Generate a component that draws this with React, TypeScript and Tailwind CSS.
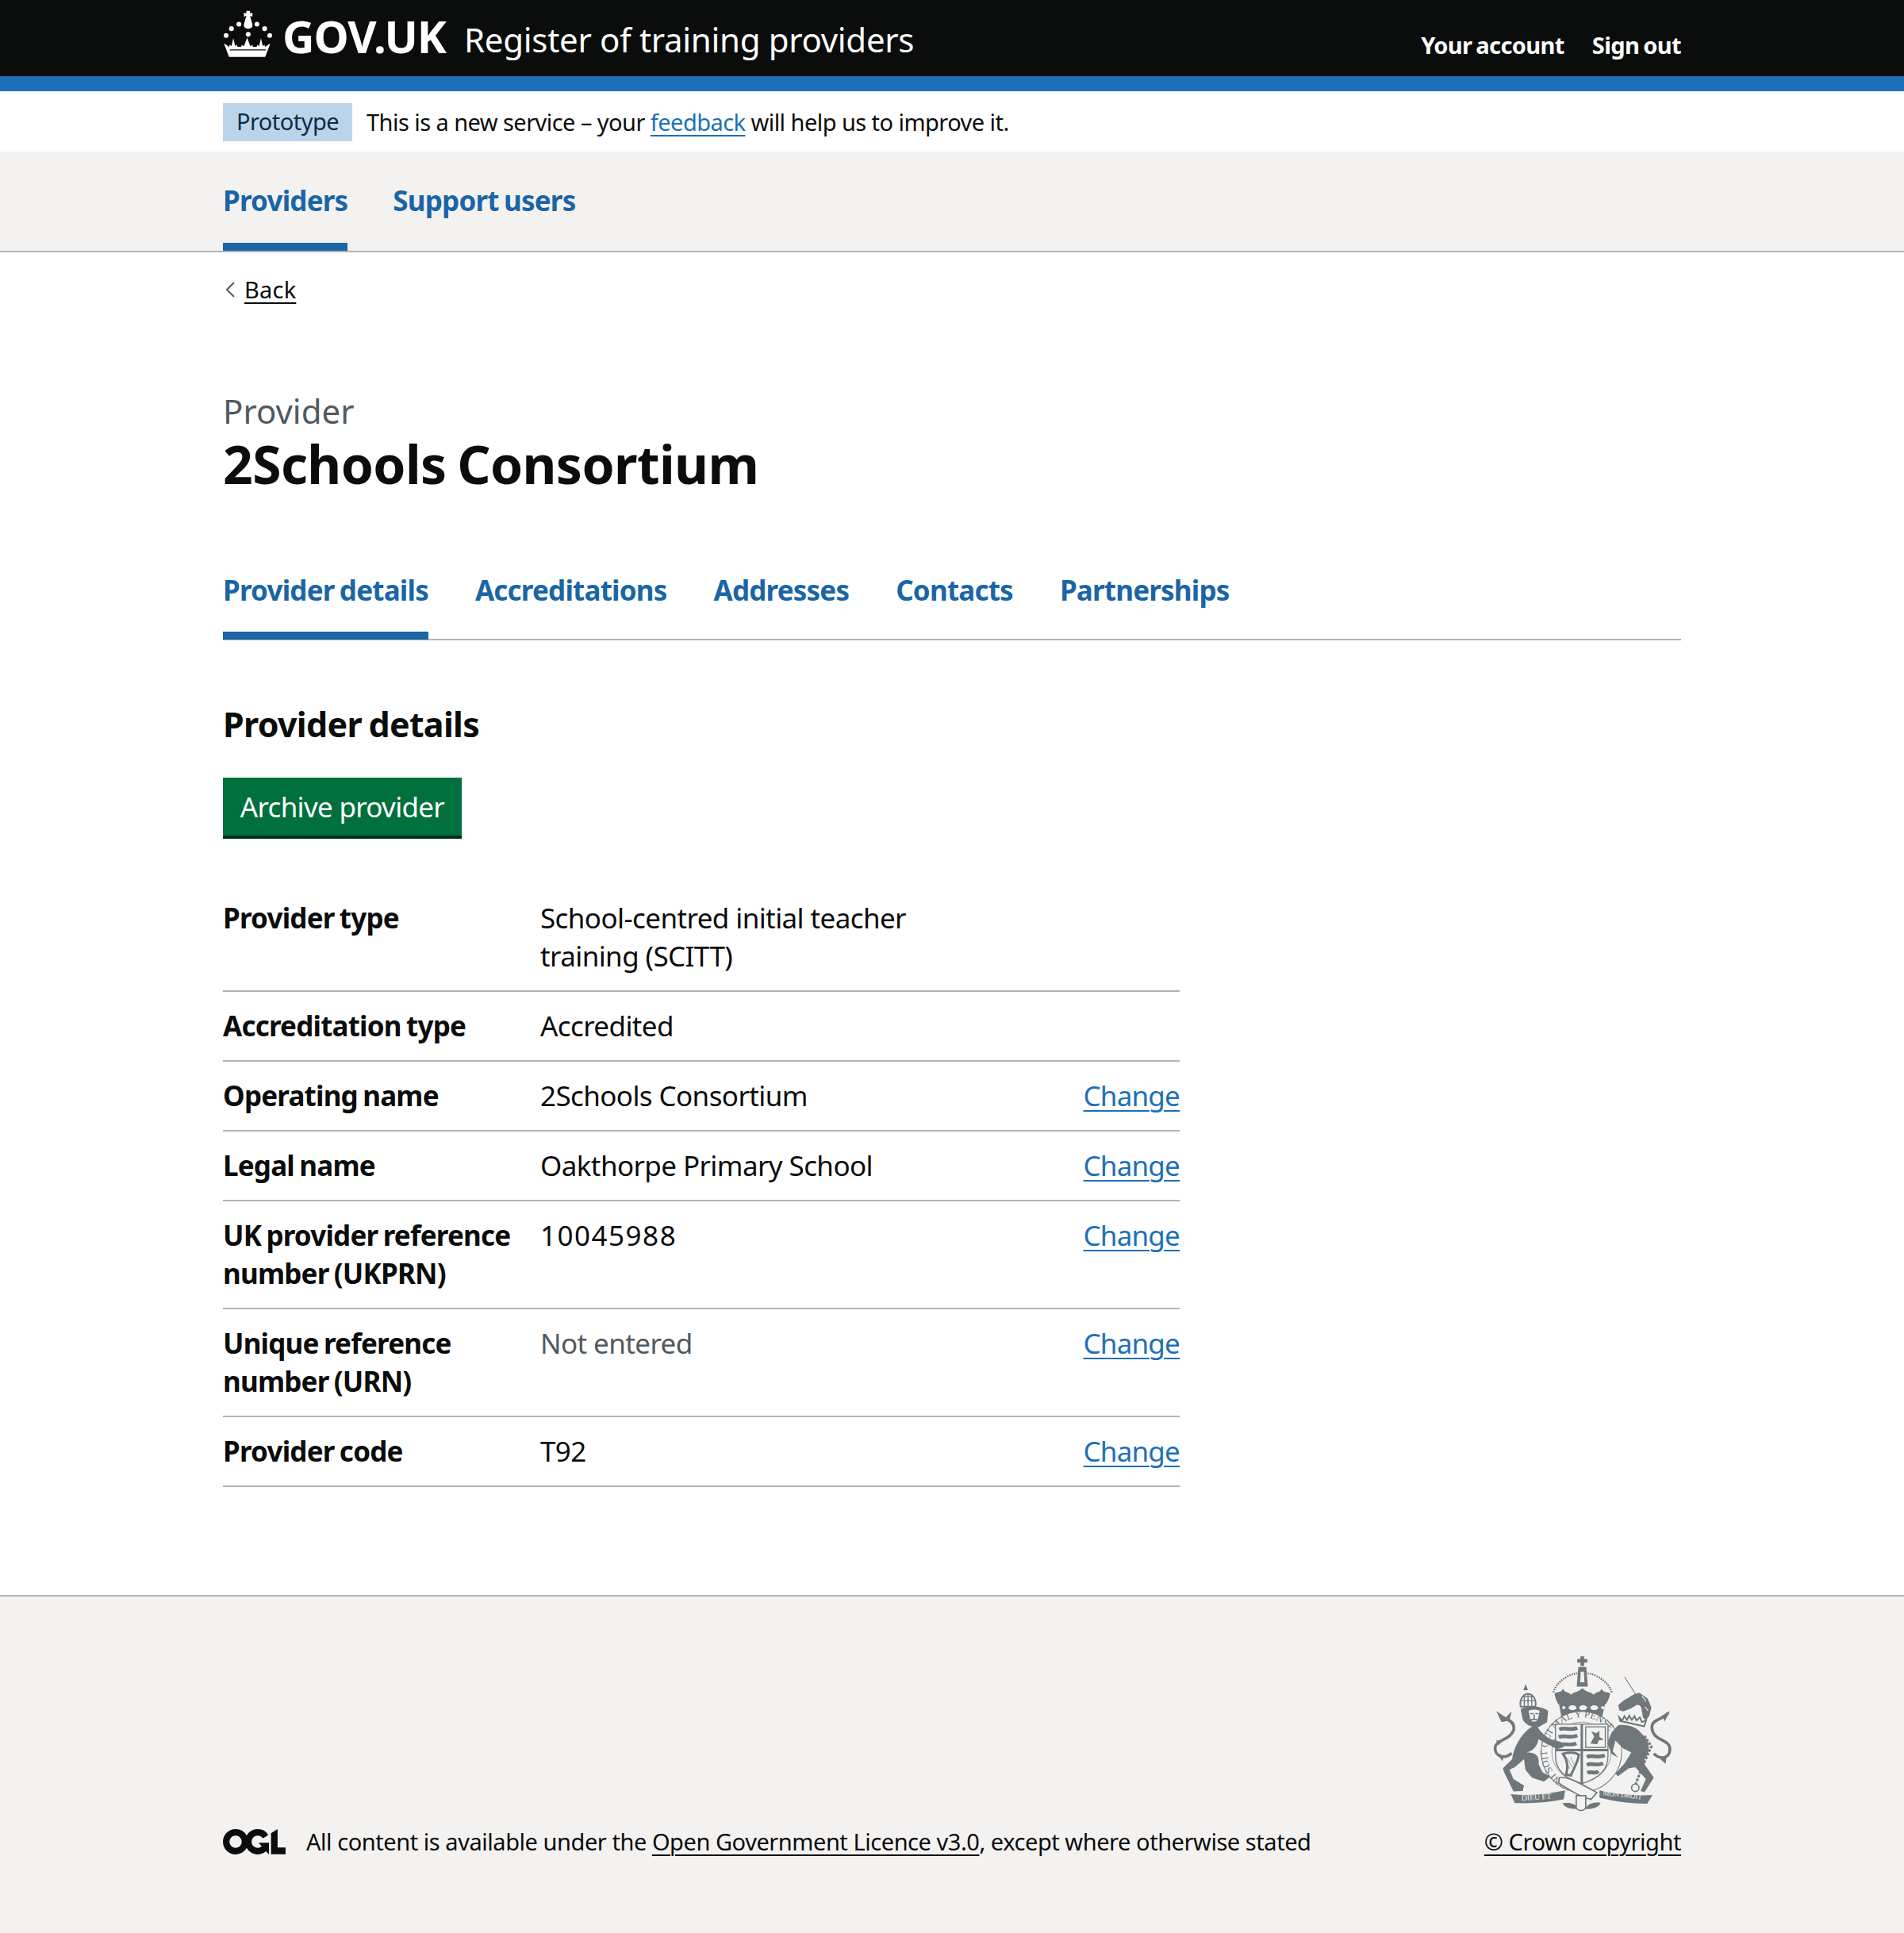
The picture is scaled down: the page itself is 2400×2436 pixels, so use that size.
const Crown = () => (
  <svg viewBox="60 38 188 176" className="w-[63px] h-[59px] block mt-[13px]" fill="#fff">
    <path d="M148 40h14v10l9-3v15l-9-3 9 32c2 10-6 16-16 16s-18-6-16-16l9-32-9 3V47l9 3z" />
    <circle cx="120" cy="90" r="9" />
    <circle cx="188" cy="90" r="9" />
    <circle cx="92" cy="107" r="9" />
    <circle cx="217" cy="107" r="9" />
    <circle cx="72" cy="133" r="9" />
    <circle cx="236" cy="133" r="9" />
    <circle cx="155" cy="128" r="9" />
    <path d="M64 163c8 3 14 8 19 13l3-9 6 6 7-30 7 30 6-6 3 8h14l2-7 8 5 12-32 12 32 8-5 2 7h14l3-8 6 6 7-30 7 30 6-6 3 9c5-5 11-10 19-13l-19 50H83z" />
    <path d="M86 185h136v4H86z" fill="#0b0c0c" />
  </svg>
);

const Ogl = () => (
  <svg viewBox="0 0 483.2 195.7" className="w-[79px] h-[32px] block" fill="#0b0c0c">
    <path d="M421.5 142.8V.1l-50.7 32.3v161.1h112.4v-50.7zm-122.3-9.6A47.12 47.12 0 0 1 221 97.8c0-26 21.1-47.1 47.1-47.1 16.7 0 31.4 8.7 39.7 21.8l42.7-27.2A97.63 97.63 0 0 0 268.1 0c-36.5 0-68.3 20.1-85.1 49.7A98 98 0 0 0 97.8 0C43.9 0 0 43.9 0 97.8s43.9 97.8 97.8 97.8c36.5 0 68.3-20.1 85.1-49.7a97.76 97.76 0 0 0 149.6 25.4l19.4 22.2h3v-87.8h-80l24.3 27.5zM97.8 145c-26 0-47.1-21.1-47.1-47.1s21.1-47.1 47.1-47.1 47.2 21 47.2 47S123.8 145 97.8 145" />
  </svg>
);

// rough drawing of the royal coat of arms, coordinates follow the reference crop
const Crest = () => {
  const c = "#6f777b";
  return (
    <svg viewBox="125 78 680 590" className="w-[227px] h-[197px] block">
      {/* crown */}
      <path d="M458 82h14v10h12v14h-12v12h-14v-12h-12V92h12z" fill={c} />
      <path d="M450 122h30l6 74h-42z" fill={c} />
      <path d="M459 140h12l2 40h-16z" fill="#f3f2f1" />
      <path d="M356 218C366 180 410 150 446 146" fill="none" stroke={c} strokeWidth="7" strokeDasharray="5 4" />
      <path d="M576 218C566 180 520 150 486 146" fill="none" stroke={c} strokeWidth="7" strokeDasharray="5 4" />
      <path d="M360 222c15-8 25 0 32-18 7 18 22 10 30 24 8-14 22-6 43-26 21 20 35 12 43 26 8-14 23-6 30-24 7 18 17 10 32 18-4 24-12 36-20 44l-10 44H386l-8-44c-8-8-14-20-18-44z" fill={c} />
      <ellipse cx="428" cy="276" rx="15" ry="9" fill="#f3f2f1" />
      <ellipse cx="468" cy="276" rx="15" ry="9" fill="#f3f2f1" />
      <ellipse cx="510" cy="276" rx="15" ry="9" fill="#f3f2f1" />
      <circle cx="395" cy="276" r="6" fill="#f3f2f1" />
      <circle cx="542" cy="276" r="6" fill="#f3f2f1" />

      {/* garter */}
      <circle cx="462" cy="442" r="152" fill="#f3f2f1" stroke={c} strokeWidth="3" />
      <circle cx="462" cy="442" r="112" fill="none" stroke={c} strokeWidth="2" />
      <path id="garter-ring" d="M462 572a130 130 0 1 1 .1 0" fill="none" />
      <text fontFamily="'Liberation Serif', serif" fontSize="38" fill={c}>
        <textPath href="#garter-ring" startOffset="3%">HONI SOIT QUI MAL Y PENSE</textPath>
      </text>

      {/* shield */}
      <path d="M364 338h198v120c0 60-50 90-99 104-49-14-99-44-99-104z" fill="#f3f2f1" stroke={c} strokeWidth="4" />
      <path d="M463 338v224M364 436h198" stroke={c} strokeWidth="9" />
      <g stroke={c} fill="none">
        <path d="M378 358c20-10 40 6 68-6M376 387c22-10 42 6 70-6M380 416c20-8 40 6 62-6" strokeWidth="14" />
        <rect x="478" y="348" width="74" height="78" strokeWidth="4" />
        <path d="M498 410l14-26-10-16 16 6 10-8v20l14 10-16 2-6 14z" fill={c} strokeWidth="3" />
        <path d="M482 462c20-10 40 6 68-6M482 492c20-10 36 6 62-6M484 522c16-8 28 6 42-6" strokeWidth="14" />
        <path d="M392 450c20-6 48-6 60 4-4 30-20 50-30 78l-18-4c6-20 8-50-12-78z" strokeWidth="9" />
        <path d="M408 466l20 36M420 462l14 28M404 480l14 26" strokeWidth="2" />
      </g>

      {/* lion */}
      <path d="M292 340c8 20 28 40 53 55l40 10 10 20-25 7-45-22-25-15c-5 25-20 45-45 50 25 0 50 5 45 45l15 30 30 15-25 20-45-15-25-30-5-40-35 30-20 10 15 35 40 25-5 20-35 2-35-72-5-15 35-35c5-40 30-90 70-120z" fill={c} />
      <path d="M232 282c20-16 80-14 104 6l-4 42-30 18c-24 4-52-6-62-28z" fill={c} />
      <path d="M262 288c12-6 30-6 42 0l-6 28-8 12h-14l-8-12z" fill="#f3f2f1" />
      <path d="M268 298h12M288 298h12M283 300v18M272 320h22" stroke={c} strokeWidth="5" fill="none" />
      <path d="M232 272c-6-30 12-48 28-48s34 18 28 48z" fill="#f3f2f1" stroke={c} strokeWidth="6" />
      <path d="M245 208h12l-6-16zM234 250h50M240 234h38M260 222v50M246 226v44M274 226v44" stroke={c} strokeWidth="4" fill={c} />
      <path d="M198 447c-25 25-66 13-62-22 4-30 56-25 70-65 5-30-20-40-40-45" fill="none" stroke={c} strokeWidth="11" />
      <path d="M140 288l36 24 22-22-8 34-30 6zM140 398l22 6-14 14zM150 460l18-4-4 22z" fill={c} />

      {/* unicorn */}
      <path d="M625 160l42 66" stroke={c} strokeWidth="3" />
      <path d="M600 268c8-10 28-26 40-30 12-10 28-18 42-18l30 22 14 34-8 30-14 18-10-12-6-34c-4-12-10-14-18-12l-24 14-26 10-14-4z" fill={c} />
      <path d="M690 232l16 20M702 272l12 16" stroke="#f3f2f1" strokeWidth="3" />
      <path d="M604 312l12 12 8-16 10 14 8-16 10 16 10-14 8 16 12-12 8 18 16-6-8 22-90-20z" fill="none" stroke={c} strokeWidth="6" />
      <path d="M600 342c30-5 70 3 90 33 30 25 35 65 10 95v20l35 50-35 55-15-5 20-45-40-45-25 5-40 30-10-10 35-40 25-40-30-15-30-30-10 40 20 25-25-15-15-40 15-40z" fill={c} />
      <path d="M700 382l26 40-36 80-24 64" fill="none" stroke={c} strokeWidth="9" strokeDasharray="10 5" />
      <circle cx="665" cy="578" r="14" fill="none" stroke={c} strokeWidth="5" />
      <path d="M735 450c35 30 65 10 60-25-5-30-70-25-67-80 2-25 42-25 62-50" fill="none" stroke={c} strokeWidth="11" />
      <path d="M796 288l-30 18 10 22zM760 470l22-4-2 22z" fill={c} />

      {/* motto */}
      <path d="M195 602c70 8 140 0 205-14l-5 34c-60 12-120 16-185 14z" fill={c} />
      <text x="236" y="627" fontFamily="'Liberation Serif', serif" fontSize="30" fill="#f3f2f1" transform="rotate(-4 236 627)">DIEU ET</text>
      <path d="M530 588c70 16 130 20 200 18l-20 32c-60 0-120-8-180-22z" fill={c} />
      <text x="542" y="606" fontFamily="'Liberation Serif', serif" fontSize="27" fill="#f3f2f1" transform="rotate(6 542 606)">MON DROIT</text>
      <path d="M378 540c40-6 90 30 142 56l-22 26c-40-8-90-40-122-62z" fill="#f3f2f1" stroke={c} strokeWidth="5" />
      <path d="M390 636c30-4 50 2 60 22-30 2-50-4-60-22zM476 658c10-20 30-26 58-24-6 18-30 26-58 24z" fill={c} />
      <path d="M442 608h36v42c0 18-36 18-36 0z" fill="#f3f2f1" stroke={c} strokeWidth="5" />
    </svg>
  );
};

const rows = [
  { key: ["Provider type"], value: ["School-centred initial teacher", "training (SCITT)"] },
  { key: ["Accreditation type"], value: ["Accredited"] },
  { key: ["Operating name"], value: ["2Schools Consortium"], change: true },
  { key: ["Legal name"], value: ["Oakthorpe Primary School"], change: true },
  { key: ["UK provider reference", "number (UKPRN)"], value: ["10045988"], change: true, digits: true },
  { key: ["Unique reference", "number (URN)"], value: ["Not entered"], change: true, muted: true },
  { key: ["Provider code"], value: ["T92"], change: true },
];

const tabs = ["Provider details", "Accreditations", "Addresses", "Contacts", "Partnerships"];

const App = () => {
  return (
    <div className="w-[2400px] h-[2436px] flex flex-col bg-white text-[#0b0c0c] font-['Noto_Sans',sans-serif]">
      <header className="h-[115px] bg-[#0b0c0c] border-b-[19px] border-[#1d70b8] text-white">
        <div className="w-[1838px] mx-auto h-full flex items-start justify-between">
          <div className="flex items-start h-[96px]">
            <Crown />
            <span className="ml-[12px] mt-[13px] text-[56px] leading-[64px] font-bold tracking-[-1px]">GOV.UK</span>
            <span className="ml-[23px] mt-[18px] text-[42px] leading-[64px] tracking-[-0.3px]">Register of training providers</span>
          </div>
          <nav className="flex gap-[35px] pt-[33px] text-[29px] leading-[48px] font-bold tracking-[-0.6px] [word-spacing:-2px]">
            <a>Your account</a>
            <a>Sign out</a>
          </nav>
        </div>
      </header>

      <div className="h-[76px] bg-white">
        <div className="w-[1838px] mx-auto flex items-center h-[78px] text-[29px] tracking-[-0.55px]">
          <strong className="h-[48px] px-[17px] bg-[#bbd4ea] text-[#0c2d4a] font-normal leading-[46px]">Prototype</strong>
          <span className="ml-[18px]">
            This is a new service – your <a className="text-[#1d70b8] underline underline-offset-[5px] decoration-2">feedback</a> will help us to improve it.
          </span>
        </div>
      </div>

      <nav className="h-[127px] bg-[#f3f2f1] border-b-[2px] border-[#b1b4b6]">
        <div className="w-[1838px] mx-auto flex gap-[57px] h-full text-[35px] font-bold text-[#1a65a6] tracking-[-0.8px] [word-spacing:-2px]">
          <a className="h-[125px] pt-[38px] leading-[48px] border-b-[10px] border-[#1a65a6]">Providers</a>
          <a className="pt-[38px] leading-[48px]">Support users</a>
        </div>
      </nav>

      <main className="w-[1838px] mx-auto flex-1">
        <a className="flex items-center gap-[11px] mt-[27px] h-[40px] text-[29px] tracking-[0.2px]">
          <svg viewBox="0 0 14 22" className="w-[14px] h-[22px] ml-[2px]" fill="none" stroke="#505a5f" strokeWidth="2">
            <path d="M12 2 3 11l9 9" />
          </svg>
          <span className="underline underline-offset-[5px] decoration-2">Back</span>
        </a>

        <div className="mt-[108px] text-[42px] leading-[50px] text-[#505a5f]">Provider</div>
        <h1 className="mt-[1px] text-[66px] leading-[80px] font-bold tracking-[-0.6px] [word-spacing:-3px]">2Schools Consortium</h1>

        <div className="mt-[84px] h-[99px] flex gap-[59px] border-b-[2px] border-[#b1b4b6] text-[35px] font-bold text-[#1a65a6] tracking-[-0.8px] [word-spacing:-2px]">
          {tabs.map((t, i) => (
            <a key={t} className={`h-[98px] pt-[12px] leading-[48px] ${i === 0 ? "border-b-[10px] border-[#1a65a6]" : ""}`}>
              {t}
            </a>
          ))}
        </div>

        <h2 className="mt-[78px] text-[43px] leading-[56px] font-bold tracking-[-0.7px] [word-spacing:-2px]">Provider details</h2>

        <button className="block mt-[39px] w-[301px] h-[77px] bg-[#00703c] text-white text-[35px] leading-[70px] border-b-[4px] border-[#002d18] tracking-[-0.7px]">
          Archive provider
        </button>

        <dl className="mt-[57px] w-[1206px]">
          {rows.map((r) => (
            <div key={r.key[0]} className="flex border-b-[2px] border-[#b1b4b6] pt-[19px] pb-[19px] text-[35px] leading-[48px] tracking-[-0.8px]">
              <dt className="w-[400px] font-bold [word-spacing:-2px]">
                {r.key.map((l) => (
                  <div key={l}>{l}</div>
                ))}
              </dt>
              <dd className={`flex-1 ${r.muted ? "text-[#505a5f]" : ""} ${r.digits ? "tracking-[1.5px]" : "tracking-[-0.6px]"}`}>
                {r.value.map((l) => (
                  <div key={l}>{l}</div>
                ))}
              </dd>
              {r.change && <a className="text-[#1d70b8] underline underline-offset-[5px] decoration-2">Change</a>}
            </div>
          ))}
        </dl>
      </main>

      <footer className="h-[426px] bg-[#f3f2f1] border-t-[2px] border-[#b1b4b6]">
        <div className="w-[1838px] mx-auto h-full flex items-end justify-between pb-[95px] text-[29px] leading-[40px] tracking-[-0.45px]">
          <div className="flex items-center">
            <Ogl />
            <span className="ml-[26px]">
              All content is available under the <a className="underline underline-offset-[5px] decoration-2">Open Government Licence v3.0</a>, except where otherwise stated
            </span>
          </div>
          <div className="flex flex-col items-center">
            <Crest />
            <a className="mt-[18px] underline underline-offset-[5px] decoration-2">© Crown copyright</a>
          </div>
        </div>
      </footer>
    </div>
  );
};

export default App;
